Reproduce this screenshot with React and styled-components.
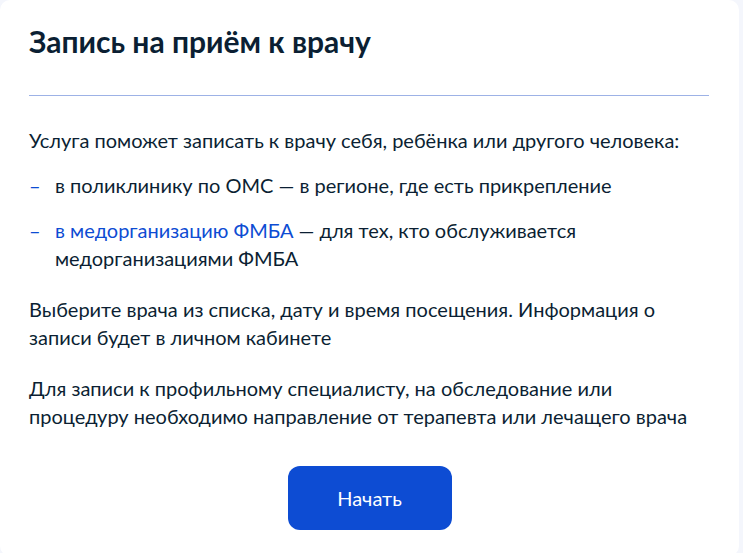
import React from "react";
import styled, { createGlobalStyle } from "styled-components";

const Global = createGlobalStyle`
  html, body { margin: 0; padding: 0; }
  body {
    background: #f4f6fc;
    font-family: Lato, "Noto Sans", sans-serif;
    color: #0b1f33;
    overflow: hidden;
  }
`;

const Card = styled.div`
  box-sizing: border-box;
  width: 739px;
  min-height: 556px;
  background: #ffffff;
  border-radius: 10px;
  padding: 23px 29px 24px 29px;
`;

const Title = styled.h1`
  margin: 0;
  font-size: 30px;
  line-height: 36px;
  font-weight: 700;
  color: #0b1f33;
`;

const Divider = styled.hr`
  margin: 36px 1px 30px 0;
  border: 0;
  height: 1px;
  background: #9db2e6;
`;

const Text = styled.p`
  margin: 0 0 ${(p) => p.$gap || 0}px 0;
  font-size: 20px;
  line-height: 28px;
`;

const List = styled.ul`
  list-style: none;
  margin: 17px 0 23px 0;
  padding: 0;
  display: flex;
  flex-direction: column;
  gap: 17px;
`;

const Item = styled.li`
  display: flex;
  font-size: 20px;
  line-height: 28px;
`;

const Dash = styled.span`
  flex: 0 0 26px;
  color: #0d4cd3;
`;

const Link = styled.a`
  color: #0d4cd3;
  text-decoration: none;
`;

const Actions = styled.div`
  display: flex;
  justify-content: center;
  margin-top: 36px;
`;

const Button = styled.button`
  width: 164px;
  height: 64px;
  border: 0;
  border-radius: 12px;
  background: #0d4cd3;
  color: #ffffff;
  font-family: Lato, "Noto Sans", sans-serif;
  font-size: 20px;
  line-height: 24px;
  cursor: pointer;
`;

export default function App() {
  return (
    <>
      <Global />
      <Card>
        <Title>Запись на приём к врачу</Title>
        <Divider />
        <Text>Услуга поможет записать к врачу себя, ребёнка или другого человека:</Text>
        <List>
          <Item>
            <Dash>–</Dash>
            <span>в поликлинику по ОМС — в регионе, где есть прикрепление</span>
          </Item>
          <Item>
            <Dash>–</Dash>
            <span>
              <Link href="#">в медорганизацию ФМБА</Link> — для тех, кто обслуживается медорганизациями ФМБА
            </span>
          </Item>
        </List>
        <Text $gap={23}>
          Выберите врача из списка, дату и время посещения. Информация о записи будет в личном кабинете
        </Text>
        <Text>
          Для записи к профильному специалисту, на обследование или процедуру необходимо направление от терапевта или лечащего врача
        </Text>
        <Actions>
          <Button>Начать</Button>
        </Actions>
      </Card>
    </>
  );
}
